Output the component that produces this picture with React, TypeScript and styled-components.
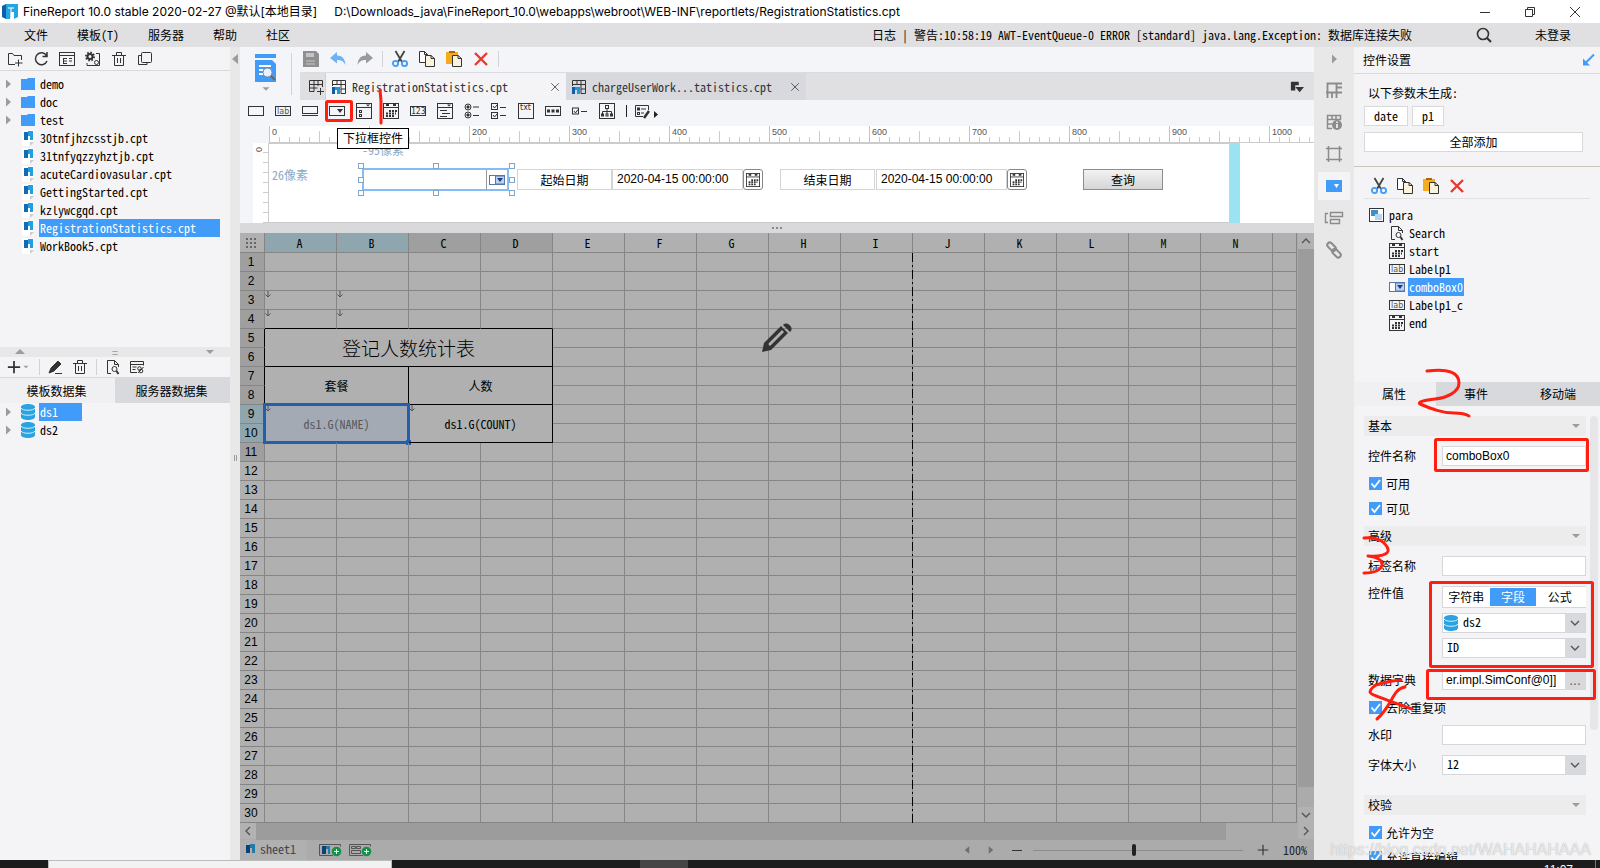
import React from "react";
import styled, { createGlobalStyle } from "styled-components";

const blue = "#419bf9";
const mono = `"Noto Sans Mono CJK SC", "DejaVu Sans Mono", monospace`;
const sans = `"Liberation Sans", "Noto Sans CJK SC", sans-serif`;

const GlobalStyle = createGlobalStyle`
  * { box-sizing: border-box; }
  html, body, #root { height: 100%; }
  body { margin: 0; overflow: hidden; color: #000; font: 12px/18px ${mono}; }
  button, input, select { font: inherit; color: inherit; margin: 0; padding: 0; border: 0; border-radius: 0; background: none; }
  button { white-space: nowrap; cursor: pointer; }
  svg { display: block; flex: none; }
`;

/* ---------- icons ---------- */

const Svg = styled.svg.attrs({ fill: "none", "aria-hidden": true })<{ $c?: string }>`
  stroke: ${(p) => p.$c ?? "#333"};
  overflow: visible;
`;

const shapes: Record<string, React.ReactNode> = {
  text: <rect x="0.5" y="3.5" width="15" height="9" />,
  label: (
    <>
      <rect x="0.5" y="3.5" width="15" height="9" />
      <text x="2" y="11" fontSize="8" fontFamily="DejaVu Sans" fill="#555" stroke="none">lab</text>
    </>
  ),
  button: <><rect x="0.5" y="3.5" width="15" height="7" /><path d="M0 12.5h16" /></>,
  combo: <><rect x="0.5" y="3.5" width="15" height="9" /><path d="M8 6h6l-3 4z" fill="#333" stroke="none" /></>,
  comboBlue: (
    <>
      <rect x="0.5" y="3.5" width="15" height="9" fill="#fff" stroke="#5577aa" />
      <path d="M6.5 4h9v8h-9z" fill="#bcd2f2" stroke="#5577aa" />
      <path d="M8 6h6l-3 4z" fill="#1d3d80" stroke="none" />
    </>
  ),
  comboCheck: (
    <>
      <rect x="0.5" y="0.5" width="15" height="15" /><path d="M0 4.5h16" />
      <path d="M10 1.500h4l-2 2z" fill="#333" stroke="none" /><rect x="3.500" y="7.500" width="2" height="2" /><rect x="3.500" y="11.500" width="2" height="2" />
    </>
  ),
  date: (
    <>
      <rect x="0.5" y="0.5" width="15" height="15" /><path d="M0 4.500h16" />
      <path d="M3 2h3M10 2h3" strokeWidth="2" /><path d="M6 8h8M3 10.500h10M3 13h8" strokeDasharray="2 1" strokeWidth="2" />
    </>
  ),
  number: (
    <>
      <rect x="0.5" y="3.500" width="15" height="9" />
      <text x="1" y="11" fontSize="8" fontFamily="DejaVu Sans Mono" fill="#333" stroke="none">123</text>
    </>
  ),
  tree: (
    <>
      <rect x="0.500" y="0.500" width="15" height="15" /><path d="M0 4.500h16M3 7.500h7M5 10.500h8M3 13.500h7" />
      <path d="M10 1.500h4l-2 2z" fill="#333" stroke="none" />
    </>
  ),
  radio: (
    <>
      <circle cx="4" cy="4" r="3" /><circle cx="4" cy="12" r="3" /><path d="M9 4h6M9 12.500h6" />
      <circle cx="4" cy="4" r="1.200" fill="#333" /><circle cx="4" cy="12" r="1.200" fill="#333" />
    </>
  ),
  checks: (
    <>
      <rect x="0.500" y="0.500" width="6" height="6" /><rect x="0.500" y="9.500" width="6" height="6" />
      <path d="M9 4.500h6M9 12.500h6M2 3l1.500 2L6 2M2 12l1.500 2L6 11" />
    </>
  ),
  area: (
    <>
      <rect x="0.500" y="0.500" width="15" height="15" />
      <text x="2" y="7" fontSize="8" fontFamily="DejaVu Sans" fill="#333" stroke="none">txt</text>
    </>
  ),
  password: <><rect x="0.500" y="3.500" width="15" height="9" /><path d="M2 8h12" strokeWidth="3" strokeDasharray="3 1.500" /></>,
  check: <><rect x="0.500" y="5" width="6" height="6" /><path d="M9 8.500h6M2 8l1.500 2L6 6.500" /></>,
  org: (
    <>
      <rect x="0.500" y="0.500" width="15" height="15" /><rect x="6.500" y="2.500" width="3" height="3" />
      <path d="M8 5.500v3M3.500 11V8.500h9V11M8 8.500V11" />
      <rect x="2.500" y="11" width="2" height="2" /><rect x="7" y="11" width="2" height="2" /><rect x="11.500" y="11" width="2" height="2" />
    </>
  ),
  edit: (
    <>
      <path d="M8 13.500H.500v-11h13V7" /><rect x="2.500" y="5" width="2" height="2" /><rect x="2.500" y="9.500" width="2" height="2" />
      <path d="M6 6h5M6 10h3" /><path d="M9 15l5-7" strokeWidth="2.500" />
    </>
  ),
  folderAdd: <path d="M8 13.500H1.500v-11h4l1.500 2h7.500V9M11.500 8.500v7M8 12h7.500" />,
  refresh: <path d="M13.500 4.500A6 6 0 1 0 14 10M14 1v4.500H9.500" strokeWidth="1.500" />,
  list: <><rect x="0.500" y="1.500" width="15" height="13" /><path d="M0 4.500h16M4.500 7v5.500M4 7.500h4M4 10h4M4 12.500h4M10 7.500h3M10 10h3" /></>,
  gearBox: (
    <>
      <circle cx="5" cy="5.500" r="2.500" strokeWidth="2" /><circle cx="5" cy="5.500" r="4" strokeWidth="2" strokeDasharray="1.600 1.500" />
      <path d="M11 2.500h3.500v12H2V12" /><circle cx="11.500" cy="11.500" r="2" />
    </>
  ),
  trash: <path d="M1 4.500h14M3.500 5v9.500h9V5M5.500 4V1.500h5V4M6.500 7v5M9.500 7v5" />,
  duplicate: <><rect x="4.500" y="1.500" width="10" height="10" rx="1" /><path d="M4 4.500H1.500v9H10v-2" /></>,
  pen: <><path d="M1 14l2-5 7-7 3 3-7 7z" fill="#333" /><path d="M7 14.500h7" /></>,
  preview: <><path d="M6 14.500H2.500V1.500h7l4 4V8M9.500 1.500v4h4" /><circle cx="9.500" cy="10" r="2.500" /><path d="M11.500 12l2 3" strokeWidth="2" /></>,
  windowLink: <><path d="M8 13.500H1.500v-11h13v4M1 5.500h14M3.500 8h4M3.500 10.500h3" /><circle cx="10.500" cy="9.500" r="1.800" /><circle cx="12" cy="12" r="1.800" /><path d="M14.500 8L9 14" /></>,
  save: <><path d="M0 0h13l3 3v13H0z" fill="#8f8f8f" stroke="none" /><path d="M3 2h8v4H3z" fill="#c4c4c4" stroke="none" /><path d="M3 10h9M3 13h9" stroke="#c8c8c8" /></>,
  undo: <path d="M7 1v3.500c5 0 8 3 8.500 9.500C13.500 10 11 9 7 9v3.500L0 7z" fill="#6fb1f5" stroke="none" />,
  redo: <path d="M9 1v3.500C4 4.500 1 7.500.500 14 2.500 10 5 9 9 9v3.500L16 7z" fill="#9a9a9a" stroke="none" />,
  cut: (
    <>
      <path d="M3.500 0l6.500 11M12.500 0L6 11" stroke="#444" strokeWidth="1.800" />
      <circle cx="3.500" cy="12.500" r="2.600" stroke={blue} strokeWidth="1.800" /><circle cx="12.500" cy="12.500" r="2.600" stroke={blue} strokeWidth="1.800" />
    </>
  ),
  copy: <><path d="M.500.500h5l3 3v8h-8z" fill="#fff" /><path d="M5.500.500v3h3" /><path d="M6.500 4.500h5.500l3.500 3v8h-9z" fill="#fdf3dc" /><path d="M12 4.500v3h3.500" /></>,
  paste: <><path d="M0 1h12v12H0z" fill="#f2ac1c" stroke="none" /><path d="M3 1h6" stroke="#a66a00" strokeWidth="2" /><path d="M6.500 4.500h5.500l3.500 3v8h-9z" fill="#fdf3dc" /><path d="M12 4.500v3h3.500" /></>,
  remove: <path d="M2 2l12 12M14 2L2 14" stroke="#e8392f" strokeWidth="2.400" />,
  gridAdd: <path d="M6 12.500H1.500v-11h13V8M1.500 5.500h13M1.500 9h8M6 1.500v11M10 1.500V7M12.500 9v7M9 12.500h7" />,
  report: <><path d="M1.500 7V1.500h13v13H10M1.500 5.500h13M10 10h4M6 1.500v4M10 1.500v13" /><path d="M1 8h3v7H1z" fill="#0d5ea9" stroke="none" /><path d="M4 8h5v7H6v-4H4z" fill="#1b9bdf" stroke="none" /></>,
  corner: <><path d="M1 2h9v4H6v6H1z" fill="#333" stroke="none" /><path d="M6 8h10l-5 6z" fill="#333" stroke="none" /></>,
  search: <><circle cx="7" cy="7" r="5.500" strokeWidth="1.600" /><path d="M11 11l4 4" strokeWidth="2.200" /></>,
  cellProp: <path d="M0 10.500h16M1.500 16V1.500h9V16M6 11v5M10 5.500h6M10 1.500h6" strokeWidth="1.800" />,
  cellInfo: <><path d="M6 14.500H1.500v-13h13V6M1 5.500h14M1 10h5M6 1v5M10 1v5" strokeWidth="1.500" /><circle cx="11" cy="11" r="5" fill="#8b8b8b" stroke="none" /><path d="M11 10v4M11 7.500v1.500" stroke="#fff" strokeWidth="1.500" /></>,
  frame: <path d="M2.500 0v16M13.500 0v16M0 2.500h16M0 13.500h16" strokeWidth="1.500" />,
  widget: <><rect y="2" width="16" height="12" fill={blue} stroke="none" /><path d="M8 6h5l-2.500 4z" fill="#fff" stroke="none" /></>,
  float: <path d="M2 3.500H-.500v9H2M4.500 2.500h12v4h-12zM4.500 9.500h9v4h-9z" strokeWidth="1.400" />,
  link: <g transform="rotate(45 8 8)" strokeWidth="2"><rect x="-1" y="5" width="10" height="5" rx="2.500" /><rect x="7" y="6" width="10" height="5" rx="2.500" /></g>,
  para: <><rect x="0.500" y="1.500" width="14" height="13" fill="#fff" /><path d="M2 3h7v6H2z" fill="#3c90c8" stroke="none" /><path d="M6 7h7v6H6z" fill="#b9d3f3" stroke="none" /></>,
  folder: <path d="M1 3h6l1-1h7v12H1z" fill={blue} stroke="none" />,
  file: <><path d="M2 0h12v11l-4 5H2z" fill="#fff" stroke="none" /><path d="M10 12h4l-4 4z" fill="#ccc" stroke="none" /><path d="M4 2h4v8H4z" fill="#146ab4" stroke="none" /><path d="M8 1h5v9h-3V6H8z" fill="#1fa1e0" stroke="none" /></>,
  db: <><path d="M1 3v10c0 4 14 4 14 0V3c0-4-14-4-14 0z" fill="#2ba3e0" stroke="none" /><path d="M1 4c1 3 13 3 14 0M1 9c1 3 13 3 14 0" stroke="#d6effb" /></>,
  plus: <path d="M8 1v14M1 8h14" strokeWidth="2" />,
  thinPlus: <path d="M8 1v14M1 8h14" strokeWidth="1.500" />,
  sheetIcon: <><path d="M2 4h4v8H2z" fill="#0b4079" stroke="none" /><path d="M6 3h5v9H8V7H6z" fill="#247aa5" stroke="none" /></>,
  addSheet: <><path d="M14 13.500H.500v-11h21v2" stroke="#555" /><path d="M3 4h4v8H3z" fill="#0b4079" stroke="none" /><path d="M7 4h4v8H9V7H7z" fill="#247aa5" stroke="none" /><circle cx="17.500" cy="9.500" r="4.800" fill="#17904a" stroke="none" /><path d="M17.500 7v5M15 9.500h5" stroke="#e5f3e8" /></>,
  addForm: <><path d="M14 13.500H.500v-11h21v2M2.500 4.500h4v2h-4zM7.500 4.500h4v2h-4zM2.500 8.500h9v3h-9z" stroke="#555" /><circle cx="17.500" cy="9.500" r="4.800" fill="#17904a" stroke="none" /><path d="M17.500 7v5M15 9.500h5" stroke="#e5f3e8" /></>,
  undock: <><path d="M14 2.500L6 10.500" stroke={blue} strokeWidth="2" /><path d="M3 6.500V13.500h7z" fill={blue} stroke="none" /></>,
  min: <path d="M3 8.500h10" />,
  restore: <path d="M3.500 5.500h7v7h-7zM5.500 5.500v-2h7v7h-2" />,
  close: <path d="M3 3l10 10M13 3L3 13" />,
  chevron: <path d="M4 6l4 4 4-4" stroke="#555" strokeWidth="1.400" />,
  down: <path d="M4 6h8l-4 4z" fill="#9c9c9c" stroke="none" />,
  up: <path d="M3 10h10L8 5z" fill="#9c9c9c" stroke="none" />,
  right: <path d="M6 3.500v9l5-4.500z" fill="#9c9c9c" stroke="none" />,
  left: <path d="M11 3v10L5 8z" fill="#9c9c9c" stroke="none" />,
  next: <path d="M5 3v10l6-5z" fill="#6f6f6f" stroke="none" />,
  prev: <path d="M11 3v10L5 8z" fill="#6f6f6f" stroke="none" />,
};

const Icon = ({ n, s = 16, c }: { n: string; s?: number; c?: string }) => (
  <Svg width={s} height={s} viewBox="0 0 16 16" $c={c}>{shapes[n]}</Svg>
);

/* ---------- frame ---------- */

const Page = styled.div`display: flex; flex-direction: column; height: 100vh;`;
const TitleBar = styled.header`
  display: flex; align-items: center; flex: none; height: 23px; padding: 0 17px 0 2px; gap: 5px;
  background: #fff; font: 12px/20px Inter, "Noto Sans CJK SC", sans-serif; white-space: pre;
`;
const PathText = styled.span`margin-left: 12px;`;
const WindowButtons = styled.div`display: flex; gap: 29px; margin-left: auto; button { height: 16px; }`;
const MenuBar = styled.nav`
  display: flex; align-items: center; flex: none; height: 24px; padding: 0 29px 0 24px; background: #e0e0e2;
`;
const Menus = styled.div`display: flex; gap: 29px; flex: 1;`;
const Log = styled.div`white-space: pre; margin-right: 64px;`;
const Login = styled.button`margin-left: 43px;`;
const Body = styled.main`display: flex; flex: 1; min-height: 0;`;
const Taskbar = styled.footer`display: flex; flex: none; height: 8px; overflow: hidden; background: #1c1c1c; padding-left: 48px;`;
const TaskSearch = styled.div`width: 344px; background: #f2f2f2; border: 1px solid #bbb; border-bottom: 0;`;
const TaskItem = styled.div`width: 48px; margin-left: 248px; background: #454545;`;
const Clock = styled.div`margin-left: auto; padding: 3px 22px 0 0; margin-right: 4px; border-right: 1px solid #777; color: #fff; font: 12px/14px ${sans};`;

/* ---------- left ---------- */

const Left = styled.aside`display: flex; flex-direction: column; flex: none; width: 230px; background: #f4f4f7;`;
const Tools = styled.div<{ $gap: number; $h: number }>`
  display: flex; align-items: center; flex: none; gap: ${(p) => p.$gap}px; height: ${(p) => p.$h}px; padding-left: 7px;
  border-bottom: 1px solid #d9d9dc;
  button { height: 16px; display: flex; align-items: center; }
`;
const VLine = styled.i<{ $h?: number }>`flex: none; width: 1px; height: ${(p) => p.$h ?? 16}px; background: #d2d2d5;`;
const Tree = styled.ul<{ $h?: number }>`
  margin: 0; padding: ${(p) => (p.$h ? 4 : 0)}px 0 0 5px; list-style: none; overflow: hidden;
  flex: ${(p) => (p.$h ? `0 0 ${p.$h}px` : "1")};
`;
const TreeRow = styled.li`display: flex; align-items: center; height: 18px;`;
const Twist = styled.span`width: 15px; height: 16px; margin-left: -5px; margin-right: 5px;`;
const RowName = styled.span<{ $on?: boolean; $w?: number }>`
  display: block; height: 18px; line-height: 17px; padding: 0 1px; margin-left: 3px;
  width: ${(p) => (p.$w ? `${p.$w}px` : "auto")};
  background: ${(p) => (p.$on ? blue : "transparent")}; color: ${(p) => (p.$on ? "#fff" : "#000")};
`;
const Splitter = styled.div`
  display: flex; align-items: center; justify-content: space-between; flex: none; height: 10px; padding: 0 12px; background: #e8e8e8; color: #999;
`;
const TabRow = styled.div<{ $h: number }>`display: flex; flex: none; height: ${(p) => p.$h}px;`;
const Tab = styled.button<{ $on?: boolean }>`flex: 1; padding-right: 2px; background: ${(p) => (p.$on ? "#f0f0f3" : "#d8d9dd")};`;
const Gutter = styled.div`
  display: flex; flex-direction: column; align-items: center; flex: none; width: 10px; padding-top: 4px; background: #e8e8e8;
`;
const Grip = styled.i`width: 3px; height: 6px; margin-top: 388px; border: solid #999; border-width: 0 1px;`;

/* ---------- centre ---------- */

const Centre = styled.section`position: relative; display: flex; flex-direction: column; flex: 1; min-width: 0; background: #f4f5f8;`;
const TopRow = styled.div`display: flex; align-items: center; flex: none; height: 53px;`;
const PreviewBox = styled.button`display: flex; flex-direction: column; align-items: center; width: 51px; height: 53px; padding-top: 7px;`;
const TopCol = styled.div`display: flex; flex-direction: column; flex: 1; min-width: 0; margin-left: 8px;`;
const MainTools = styled.div`
  display: flex; align-items: center; height: 25px; padding: 0 0 2px 3px; gap: 11px;
  button { height: 16px; }
  i { margin: 0 -2px; }
`;
const DocTabs = styled.div`display: flex; height: 28px; background: #e0e0e3; border-top: 1px solid #dcdce0;`;
const AddTab = styled.button`display: flex; align-items: center; width: 26px; padding-left: 8px; background: #dfdfe1; border-right: 1px solid #d0d0d3;`;
const DocTab = styled.div<{ $on?: boolean }>`
  display: flex; align-items: center; width: 240px; padding: 0 5px; gap: 5px; color: #333; line-height: 16px;
  background: ${(p) => (p.$on ? "#f4f4f7" : "#d8d9de")};
  button { margin-left: auto; display: flex; }
`;
const CornerButton = styled.button`margin-left: auto; padding-right: 10px;`;
const WidgetBar = styled.div`
  display: flex; align-items: center; flex: none; height: 26px; padding: 0 0 4px 8px; gap: 11px;
  button { height: 16px; display: flex; align-items: center; gap: 2px; }
`;
const Dark = styled.i`width: 1px; height: 12px; margin: 0 -3px 0 0; background: #222;`;
const Ruler = styled.div`
  display: flex; flex: none; height: 17px; margin-left: 29px; overflow: hidden; border-bottom: 1px solid #ccc; background: #fff;
`;
const RulerStep = styled.div`
  flex: 0 0 100px; padding-left: 2px; border-left: 1px solid #c4c4c8; color: #555; font: 9px/13px ${sans};
  background:
    repeating-linear-gradient(90deg, transparent 0 9px, #ccc 9px 10px) 0 100% / 100% 5px no-repeat,
    linear-gradient(90deg, transparent 49px, #ccc 49px 50px, transparent 50px) 0 100% / 100% 11px no-repeat;
  &:last-child { flex: 1 0 0; }
`;
const FormRow = styled.div`display: flex; flex: none; height: 80px;`;
const SideRuler = styled.div`
  width: 16px; margin-left: 13px; padding: 0 0 0 2px; border-right: 1px solid #ccc; color: #555; font: 9px/9px ${sans};
  background: repeating-linear-gradient(#fff 0 9px, #ccc 9px 10px) 100% 0 / 5px 100% no-repeat #fff;
  span { display: block; width: 9px; transform: rotate(-90deg); }
`;
const Canvas = styled.div`position: relative; flex: 1; background: #fff;`;
const FormBody = styled.div`width: 960px; height: 80px; border: solid #ccc; border-width: 1px 0;`;
const FormEdge = styled.i`position: absolute; left: 960px; top: 0; width: 11px; height: 80px; background: #9be3f2;`;
const Hint = styled.span<{ $x: number; $y: number }>`
  position: absolute; left: ${(p) => p.$x}px; top: ${(p) => p.$y}px; color: #8ba9c6; line-height: 16px;
`;
const Placed = styled.div<{ $x: number; $w: number }>`
  position: absolute; left: ${(p) => p.$x}px; top: 26px; width: ${(p) => p.$w}px; height: 21px; display: flex;
`;
const FormLabel = styled.label`flex: 1; border: 1px solid #d4d4d4; text-align: center; line-height: 20px;`;
const DateInput = styled.input`flex: 1; min-width: 0; padding: 0 0 2px 4px; border: 1px solid #d4d4d4; font: 12px/16px ${sans};`;
const DateButton = styled.button`width: 20px; padding-left: 2px; border: 1px solid #888; border-radius: 3px; background: #fff;`;
const QueryButton = styled.button`flex: 1; border: 1px solid #8c8c8c; background: linear-gradient(#f2f2f2, #d6d6d6); text-align: center;`;
const ComboFrame = styled.div`flex: 1; display: flex; margin: -1px 0; border: 2px solid #84bbf8;`;
const ComboInput = styled.input`flex: 1; min-width: 0; border-right: 1px solid #999;`;
const ComboButton = styled.button`width: 20px; padding-left: 2px;`;
const Handle = styled.i<{ $x: number; $y: number }>`
  position: absolute; left: ${(p) => p.$x}px; top: ${(p) => p.$y}px; width: 6px; height: 6px; border: 1px solid #83a5c8; background: #fff;
`;
const Tooltip = styled.div`
  position: absolute; left: 97px; top: 81px; width: 72px; height: 21px; border: 1px solid #000; background: #fff; text-align: center; line-height: 18px;
`;
const FormSplit = styled.div`
  display: flex; align-items: center; justify-content: center; flex: none; height: 10px; background: #d9d9dc;
  i { width: 10px; border-top: 2px dotted #888; }
`;

/* ---------- sheet ---------- */

const SheetArea = styled.div`display: flex; flex: 1; min-height: 0; background: #ababab;`;
const Cells = styled.div`position: relative; flex: 1; min-width: 0; overflow: hidden; background: #b0b0b0;`;
const Grid = styled.table`
  width: 100%; table-layout: fixed; border-collapse: separate; border-spacing: 0;
  tr { height: 19px; } thead tr { height: 20px; }
  th, td { padding: 0; border: solid #858585; border-width: 0 1px 1px 0; line-height: 16px; font-weight: 400; text-align: center; }
`;
const Head = styled.th<{ $t: number }>`
  && { font-weight: 500; padding-right: 2px; background: ${(p) => ["#b0b0b0", "#9f9f9f", "#8fa6ae"][p.$t]}; }
`;
const RowHead = styled(Head)<{ $ink?: boolean }>`
  && { font: 12px/16px ${sans}; border-right-color: ${(p) => (p.$ink ? "#000" : "#858585")}; }
`;
const CornerDots = styled(Svg)`margin: auto;`;
const Cell = styled.td<{ $inkB?: boolean; $inkR?: boolean; $big?: boolean; $on?: boolean }>`
  && {
    position: relative;
    ${(p) => (p.$inkB ? "border-bottom-color: #000;" : "")}
    ${(p) => (p.$inkR ? "border-right-color: #000;" : "")}
    ${(p) => (p.$big ? `font: 300 19px/24px "Noto Sans CJK SC", sans-serif;` : "")}
    ${(p) => (p.$on ? "background: #a4aab3; color: #54585e;" : "")}
  }
`;
const Selection = styled.i`
  position: absolute; inset: -2px; border: 3px solid #235fae;
  &::after { content: ""; position: absolute; right: -4px; bottom: -4px; width: 5px; height: 5px; background: #235fae; }
`;
const Flow = styled.i`position: absolute; left: 0; top: 0;`;
const PageBreak = styled.i`
  position: absolute; left: 672px; top: 20px; bottom: 0; width: 1px;
  background: repeating-linear-gradient(#000 0 9px, transparent 9px 12px, #000 12px 14px, transparent 14px 17px);
`;
const PencilMark = styled.div`position: absolute; left: 522px; top: 89px;`;
const VScroll = styled.div`display: flex; flex-direction: column; justify-content: space-between; width: 17px; padding-left: 1px;`;
const HScroll = styled.div`display: flex; justify-content: space-between; flex: none; height: 17px; background: #ababab;`;
const ScrollButton = styled.button<{ $r: number }>`
  flex: none; width: 16px; height: 16px; background: #b2b2b2; svg { transform: rotate(${(p) => p.$r}deg); }
`;
const Thumb = styled.i`flex: 1; margin-right: 72px; background: #9c9c9c;`;
const VThumb = styled.i`flex: 1; margin-bottom: 20px; background: #9c9c9c;`;
const Status = styled.div`
  display: flex; align-items: center; flex: none; height: 20px; padding-right: 7px; background: #ababab; color: #222;
  button { display: flex; align-items: center; }
`;
const SheetTab = styled.button`width: 67px; height: 20px; padding: 0 0 2px 4px; background: #b0b0b0; color: #444; margin-right: 12px;`;
const Pager = styled.div`display: flex; gap: 12px; margin: 0 12px 0 auto;`;
const Zoom = styled.input`
  appearance: none; width: 210px; height: 14px; margin: 0 14px 0 8px;
  background: linear-gradient(#8c8c8c, #8c8c8c) 0 7px / 100% 1px no-repeat;
  &::-webkit-slider-thumb { appearance: none; width: 4px; height: 12px; border-radius: 2px; background: #222; }
`;
const ZoomValue = styled.span`margin-left: 14px;`;

/* ---------- right ---------- */

const Strip = styled.div`display: flex; flex-direction: column; align-items: center; flex: none; width: 40px; background: #e8e8e8;`;
const StripButton = styled.button<{ $on?: boolean; $h?: number }>`
  display: flex; align-items: center; justify-content: center; width: 32px; height: ${(p) => p.$h ?? 28}px; margin-bottom: ${(p) => (p.$h ? 5 : 4)}px;
  background: ${(p) => (p.$on ? "#f4f4f7" : "transparent")};
`;
const Right = styled.aside`position: relative; display: flex; flex-direction: column; flex: none; width: 246px; background: #f4f4f7;`;
const PanelTitle = styled.div`
  display: flex; align-items: center; justify-content: space-between; flex: none; height: 27px; padding: 0 4px 0 9px; border-bottom: 1px solid #d9d9dc;
`;
const Params = styled.div`
  display: flex; flex-direction: column; flex: none; height: 93px; padding: 10px 17px 0 10px; border-bottom: 1px solid #cbc6b8;
  p { margin: 0 0 4px 4px; }
`;
const ParamRow = styled.div`display: flex; gap: 4px; margin-bottom: 6px;`;
const BoxButton = styled.button<{ $w?: number }>`
  width: ${(p) => (p.$w ? `${p.$w}px` : "100%")}; height: 20px; line-height: 16px; border: 1px solid #d9d9dc; background: #fff;
`;
const WidgetTree = styled.div`flex: none; height: 215px; padding: 0 10px;`;
const TreeTools = styled.div`
  display: flex; align-items: center; gap: 10px; height: 32px; padding: 6px 0 0 7px; margin-bottom: 7px; border-bottom: 1px solid #e2e2e5;
  button { height: 10px; display: flex; align-items: center; }
`;
const Node = styled.div<{ $in?: boolean }>`display: flex; align-items: center; height: 18px; padding-left: ${(p) => (p.$in ? 25 : 5)}px;`;
const Props = styled.div`display: flex; flex: 1; min-height: 0; overflow: hidden; padding: 10px 2px 0 10px; gap: 4px;`;
const PropList = styled.div`display: flex; flex-direction: column; flex: 1; gap: 10px; line-height: 16px;`;
const PropScroll = styled.i`width: 8px; height: 314px; border-radius: 4px; background: #e6e6e8;`;
const Section = styled.button<{ $gap?: boolean }>`
  display: flex; align-items: center; justify-content: space-between; flex: none; height: 20px; padding: 0 2px 0 4px;
  margin-top: ${(p) => (p.$gap ? 10 : 0)}px; background: #ececec;
`;
const Field = styled.div`
  display: flex; flex: none; align-items: flex-start; padding-left: 4px;
  label, > span { width: 74px; line-height: 20px; }
  > span { line-height: 14px; }
`;
const Box = styled.input`width: 144px; height: 20px; padding: 0 3px; border: 1px solid #d6d7da; background: #fff; font: 12px/16px ${sans};`;
const Stack = styled.div`display: flex; flex-direction: column; gap: 5px; width: 144px; padding-bottom: 2px;`;
const Segments = styled.div`display: flex; height: 22px; padding: 1px 3px 1px 0; border: solid #d6d7da; border-width: 1px 0 1px 1px; background: #fff;`;
const Segment = styled.button<{ $on?: boolean }>`
  flex: 1; background: ${(p) => (p.$on ? blue : "#fff")}; color: ${(p) => (p.$on ? "#fff" : "#000")};
`;
const SelectBox = styled.div`
  display: flex; align-items: center; width: 144px; height: 20px; border: 1px solid #d6d7da; background: #fff;
  select { flex: 1; height: 18px; padding: 0 0 2px 4px; appearance: none; outline: 0; }
  i, button { display: flex; flex: none; align-items: center; justify-content: center; width: 20px; height: 18px; background: #d8d9dd; font: 14px/16px ${sans}; color: #666; }
  input { flex: 1; min-width: 0; padding-left: 3px; font: 12px/16px ${sans}; }
`;
const CheckRow = styled.label`display: flex; align-items: center; flex: none; gap: 4px; height: 15px; padding-left: 5px;`;
const Check = styled.input`
  appearance: none; width: 13px; height: 13px;
  background: ${blue} url("data:image/svg+xml,%3Csvg xmlns='http://www.w3.org/2000/svg' viewBox='0 0 13 13'%3E%3Cpath d='M2.500 6.500l3 3.500L11 3' fill='none' stroke='white' stroke-width='1.800'/%3E%3C/svg%3E");
`;
const Ink = styled.svg`position: absolute; left: 0; top: 0; pointer-events: none; fill: none; stroke: #ff1f10; stroke-width: 3px; stroke-linecap: round; stroke-linejoin: round;`;
const Watermark = styled.div`
  position: absolute; right: 9px; bottom: -1px; color: rgba(255, 255, 255, 0.75); text-shadow: 0 0 1px #999;
  font: 16px/22px ${sans}; pointer-events: none;
`;

/* ---------- data ---------- */

const files: [string, string][] = [
  ["folder", "demo"], ["folder", "doc"], ["folder", "test"], ["file", "30tnfjhzcsstjb.cpt"], ["file", "31tnfyqzzyhztjb.cpt"],
  ["file", "acuteCardiovasular.cpt"], ["file", "GettingStarted.cpt"], ["file", "kzlywcgqd.cpt"], ["file", "RegistrationStatistics.cpt"], ["file", "WorkBook5.cpt"],
];
const widgets = ["text", "label", "button", "combo", "comboCheck", "date", "number", "tree", "radio", "checks", "area", "password", "check", "org"];
const nodes: [string, string][] = [
  ["preview", "Search"], ["date", "start"], ["label", "Labelp1"], ["comboBlue", "comboBox0"], ["label", "Labelp1_c"], ["date", "end"],
];
const editTools = ["cut", "copy", "paste", "remove"];
const columns = "ABCDEFGHIJKLMN".split("");
const range = (n: number) => Array.from({ length: n }, (_, i) => i);

const IconButton = ({ n, s, c }: { n: string; s?: number; c?: string }) => <button aria-label={n}><Icon n={n} s={s} c={c} /></button>;

const FlowArrow = () => (
  <Flow><Svg width="6" height="7" viewBox="0 0 6 7" $c="#555"><path d="M3 0v6M.500 3.500L3 6l2.500-2.500" /></Svg></Flow>
);

const CheckItem = ({ text }: { text: string }) => <CheckRow><Check type="checkbox" defaultChecked />{text}</CheckRow>;

const SheetRow = ({ r }: { r: number }) => {
  const inTable = r >= 5 && r <= 10;
  const tone = r === 9 || r === 10 ? 2 : r <= 11 ? 1 : 0;
  return (
    <tr>
      <RowHead $t={tone} $ink={inTable}>{r}</RowHead>
      {r === 5 && <Cell colSpan={4} rowSpan={2} $inkB $inkR $big>登记人数统计表</Cell>}
      {r === 7 && <><Cell colSpan={2} rowSpan={2} $inkB $inkR>套餐</Cell><Cell colSpan={2} rowSpan={2} $inkB $inkR>人数</Cell></>}
      {r === 9 && (
        <>
          <Cell colSpan={2} rowSpan={2} $inkB $inkR $on><FlowArrow />ds1.G(NAME)<Selection /></Cell>
          <Cell colSpan={2} rowSpan={2} $inkB $inkR><FlowArrow />ds1.G(COUNT)</Cell>
        </>
      )}
      {range(inTable ? 11 : 15).map((i) => (
        <Cell key={i} $inkB={r === 4 && i < 4}>{(r === 3 || r === 4) && i < 2 && <FlowArrow />}</Cell>
      ))}
    </tr>
  );
};

export default function App() {
  return (
    <Page>
      <GlobalStyle />
      <TitleBar>
        <Svg width="16" height="17" viewBox="0 0 16 17" $c="none"><path d="M0 3l4-2v15l-4-2z" fill="#0d5ea9" /><path d="M4 1h12v13l-4 2V9H9l-1 7H4z" fill="#22a5e2" /><path d="M6 5h6M9 5v8" stroke="#fff" /></Svg>
        <span>FineReport 10.0 stable 2020-02-27 @默认[本地目录]</span>
        <PathText>D:\Downloads_java\FineReport_10.0\webapps\webroot\WEB-INF\reportlets/RegistrationStatistics.cpt</PathText>
        <WindowButtons><IconButton n="min" /><IconButton n="restore" /><IconButton n="close" /></WindowButtons>
      </TitleBar>
      <MenuBar>
        <Menus>{["文件", "模板(T)", "服务器", "帮助", "社区"].map((m) => <button key={m}>{m}</button>)}</Menus>
        <Log>日志 | 警告:10:58:19 AWT-EventQueue-0 ERROR [standard] java.lang.Exception: 数据库连接失败</Log>
        <IconButton n="search" />
        <Login>未登录</Login>
      </MenuBar>
      <Body>
        <Left>
          <Tools $gap={10} $h={24}>{["folderAdd", "refresh", "list", "gearBox", "trash", "duplicate"].map((n) => <IconButton key={n} n={n} />)}</Tools>
          <Tree $h={276}>
            {files.map(([icon, name]) => (
              <TreeRow key={name}>
                <Twist>{icon === "folder" && <Icon n="right" />}</Twist>
                <Icon n={icon} />
                <RowName $on={name.startsWith("Reg")} $w={name.startsWith("Reg") ? 181 : undefined}>{name}</RowName>
              </TreeRow>
            ))}
          </Tree>
          <Splitter><Icon n="up" /><span>=</span><Icon n="down" /></Splitter>
          <Tools $gap={8} $h={21}>
            <button aria-label="add"><Icon n="plus" s={14} /><Icon n="down" s={10} /></button><VLine /><IconButton n="pen" /><IconButton n="trash" /><VLine />
            <IconButton n="preview" /><IconButton n="windowLink" />
          </Tools>
          <TabRow $h={25}><Tab $on>模板数据集</Tab><Tab>服务器数据集</Tab></TabRow>
          <Tree>
            {["ds1", "ds2"].map((d) => (
              <TreeRow key={d}><Twist><Icon n="right" /></Twist><Icon n="db" /><RowName $on={d === "ds1"} $w={43}>{d}</RowName></TreeRow>
            ))}
          </Tree>
        </Left>
        <Gutter><Icon n="left" /><Grip /></Gutter>

        <Centre>
          <TopRow>
            <PreviewBox aria-label="preview">
              <Svg width="21" height="28" viewBox="0 0 21 28" $c="none">
                <path d="M0 0h21v4H0zM0 6h17l4 4v18H0z" fill={blue} /><path d="M4 12h12M4 16h4M4 20h4" stroke="#fff" strokeWidth="2" />
                <circle cx="12.500" cy="18.500" r="4.500" fill="#e8f2fd" stroke="#888" /><path d="M16 22l4 4" stroke="#666" strokeWidth="2" />
              </Svg>
              <Icon n="down" s={14} />
            </PreviewBox>
            <VLine $h={42} />
            <TopCol>
              <MainTools>
                <IconButton n="save" /><IconButton n="undo" /><IconButton n="redo" /><VLine />
                {editTools.map((n) => <IconButton key={n} n={n} />)}<VLine />
              </MainTools>
              <DocTabs>
                <AddTab aria-label="new"><Icon n="gridAdd" /></AddTab>
                <DocTab $on><Icon n="report" />RegistrationStatistics.cpt<IconButton n="close" s={12} /></DocTab>
                <DocTab><Icon n="report" />chargeUserWork...tatistics.cpt<IconButton n="close" s={12} /></DocTab>
                <CornerButton aria-label="tabs"><Icon n="corner" s={14} /></CornerButton>
              </DocTabs>
            </TopCol>
          </TopRow>
          <WidgetBar>
            {widgets.map((n) => <IconButton key={n} n={n} />)}
            <Dark />
            <button aria-label="more"><Icon n="edit" /><Svg width="5" height="16" viewBox="0 0 5 16" $c="none"><path d="M1 8v7l4-3.500z" fill="#222" /></Svg></button>
          </WidgetBar>
          <Ruler>{range(11).map((i) => <RulerStep key={i}>{i * 100}</RulerStep>)}</Ruler>
          <FormRow>
            <SideRuler><span>0</span></SideRuler>
            <Canvas>
              <FormBody />
              <FormEdge />
              <Hint $x={3} $y={24}>26像素</Hint>
              <Hint $x={93} $y={-1}>-95像素</Hint>
              <Placed $x={93} $w={147}><ComboFrame><ComboInput aria-label="comboBox0" /><ComboButton aria-label="open"><Icon n="comboBlue" /></ComboButton></ComboFrame></Placed>
              {[89, 164, 240].flatMap((x) => [20, 34, 47].map((y) => (x === 164 && y === 34 ? null : <Handle key={`${x}-${y}`} $x={x} $y={y} />)))}
              <Placed $x={248} $w={95}><FormLabel htmlFor="start">起始日期</FormLabel></Placed>
              <Placed $x={343} $w={151}><DateInput id="start" defaultValue="2020-04-15 00:00:00" /><DateButton aria-label="pick start"><Icon n="date" s={14} /></DateButton></Placed>
              <Placed $x={511} $w={95}><FormLabel htmlFor="end">结束日期</FormLabel></Placed>
              <Placed $x={607} $w={151}><DateInput id="end" defaultValue="2020-04-15 00:00:00" /><DateButton aria-label="pick end"><Icon n="date" s={14} /></DateButton></Placed>
              <Placed $x={814} $w={80}><QueryButton>查询</QueryButton></Placed>
            </Canvas>
          </FormRow>
          <FormSplit><i /></FormSplit>
          <SheetArea>
            <Cells>
              <Grid>
                <colgroup><col width={25} />{columns.map((c) => <col key={c} width={72} />)}<col /></colgroup>
                <thead>
                  <tr>
                    <Head $t={0}><CornerDots width="12" height="10" viewBox="0 0 12 10" $c="#666"><path d="M1 1h11M1 5h11M1 9h11" strokeWidth="2" strokeDasharray="2 2" /></CornerDots></Head>
                    {columns.map((c, i) => <Head key={c} $t={i < 2 ? 2 : i < 4 ? 1 : 0}>{c}</Head>)}
                    <Head $t={0} />
                  </tr>
                </thead>
                <tbody>{range(30).map((i) => <SheetRow key={i} r={i + 1} />)}</tbody>
              </Grid>
              <PageBreak />
              <PencilMark>
                <Svg width="30" height="30" viewBox="0 0 30 30" $c="none">
                  <path fillRule="evenodd" d="M0 30l2-9L19 4l7 7L9 28zM6 22l2 2L22 10l-2-2z" fill="#333" /><path d="M21 3c4-5 12 3 7 7z" fill="#333" />
                </Svg>
              </PencilMark>
            </Cells>
            <VScroll><ScrollButton $r={180} aria-label="up"><Icon n="chevron" /></ScrollButton><VThumb /><ScrollButton $r={0} aria-label="down"><Icon n="chevron" /></ScrollButton></VScroll>
          </SheetArea>
          <HScroll><ScrollButton $r={90} aria-label="left"><Icon n="chevron" /></ScrollButton><Thumb /><ScrollButton $r={270} aria-label="right"><Icon n="chevron" /></ScrollButton></HScroll>
          <Status>
            <SheetTab><Icon n="sheetIcon" />sheet1</SheetTab>
            <button aria-label="add sheet"><Svg width="30" height="16" viewBox="0 0 30 16">{shapes.addSheet}</Svg></button>
            <button aria-label="add form"><Svg width="22" height="16" viewBox="0 0 22 16">{shapes.addForm}</Svg></button>
            <Pager><IconButton n="prev" s={12} /><IconButton n="next" s={12} /></Pager>
            <IconButton n="min" />
            <Zoom type="range" aria-label="zoom" min={0} max={100} defaultValue={48} />
            <IconButton n="thinPlus" s={12} />
            <ZoomValue>100%</ZoomValue>
          </Status>
          <Tooltip>下拉框控件</Tooltip>
          <Ink width="420" height="90" viewBox="240 47 420 90"><rect x="326.500" y="101.500" width="25" height="19" rx="1" /><path d="M380 90l1 11v22" /></Ink>
        </Centre>

        <Strip>
          <StripButton $h={24}><Icon n="right" /></StripButton>
          {["cellProp", "cellInfo", "frame", "widget", "float", "link"].map((n) => <StripButton key={n} $on={n === "widget"} aria-label={n}><Icon n={n} c="#8b8b8b" /></StripButton>)}
        </Strip>

        <Right>
          <PanelTitle>控件设置<IconButton n="undock" /></PanelTitle>
          <Params>
            <p>以下参数未生成:</p>
            <ParamRow><BoxButton $w={44}>date</BoxButton><BoxButton $w={32}>p1</BoxButton></ParamRow>
            <BoxButton>全部添加</BoxButton>
          </Params>
          <WidgetTree>
            <TreeTools>{editTools.map((n) => <IconButton key={n} n={n} />)}</TreeTools>
            <Node><Icon n="para" /><RowName>para</RowName></Node>
            {nodes.map(([icon, name]) => <Node key={name} $in><Icon n={icon} /><RowName $on={name === "comboBox0"}>{name}</RowName></Node>)}
          </WidgetTree>
          <TabRow $h={24}><Tab $on>属性</Tab><Tab>事件</Tab><Tab>移动端</Tab></TabRow>
          <Props>
            <PropList>
              <Section>基本<Icon n="down" /></Section>
              <Field><label htmlFor="name">控件名称</label><Box id="name" defaultValue="comboBox0" /></Field>
              <CheckItem text="可用" />
              <CheckItem text="可见" />
              <Section>高级<Icon n="down" /></Section>
              <Field><label htmlFor="tag">标签名称</label><Box id="tag" /></Field>
              <Field>
                <span>控件值</span>
                <Stack>
                  <Segments><Segment>字符串</Segment><Segment $on>字段</Segment><Segment>公式</Segment></Segments>
                  <SelectBox><Icon n="db" /><select aria-label="dataset"><option>ds2</option></select><i><Icon n="chevron" /></i></SelectBox>
                  <SelectBox><select aria-label="column"><option>ID</option></select><i><Icon n="chevron" /></i></SelectBox>
                </Stack>
              </Field>
              <Field><label htmlFor="dict">数据字典</label><SelectBox><input id="dict" defaultValue="er.impl.SimConf@0]]" /><button>...</button></SelectBox></Field>
              <CheckItem text="去除重复项" />
              <Field><label htmlFor="mark">水印</label><Box id="mark" /></Field>
              <Field><label htmlFor="size">字体大小</label><SelectBox><select id="size"><option>12</option></select><i><Icon n="chevron" /></i></SelectBox></Field>
              <Section $gap>校验<Icon n="down" /></Section>
              <CheckItem text="允许为空" />
              <CheckItem text="允许直接编辑" />
            </PropList>
            <PropScroll />
          </Props>
          <Ink width="246" height="700" viewBox="1354 47 246 700">
            <rect x="1435.500" y="439.500" width="152" height="31" rx="1" />
            <rect x="1430.500" y="582.500" width="162" height="84" rx="1" />
            <rect x="1427.500" y="670.500" width="167" height="28" rx="1" />
            <path d="M1427 371c22-3 32 2 32 12s-14 15-24 16-18 3-15 5c12 5 22 9 34 9 6 0 10 0 15 3" />
            <path d="M1364 538c14-2 22 5 24 11s-10 8-20 7c10 1 15 5 14 9s-6 8-18 8" />
            <path d="M1401 680c-14 2-29 3-31 12 0 3 18 8 42 17M1405 687c-13 2-12 18-28 32" />
          </Ink>
          <Watermark>https://blog.csdn.net/WAHAHAHAAA</Watermark>
        </Right>
      </Body>
      <Taskbar><TaskSearch /><TaskItem /><Clock>11:07</Clock></Taskbar>
    </Page>
  );
}
